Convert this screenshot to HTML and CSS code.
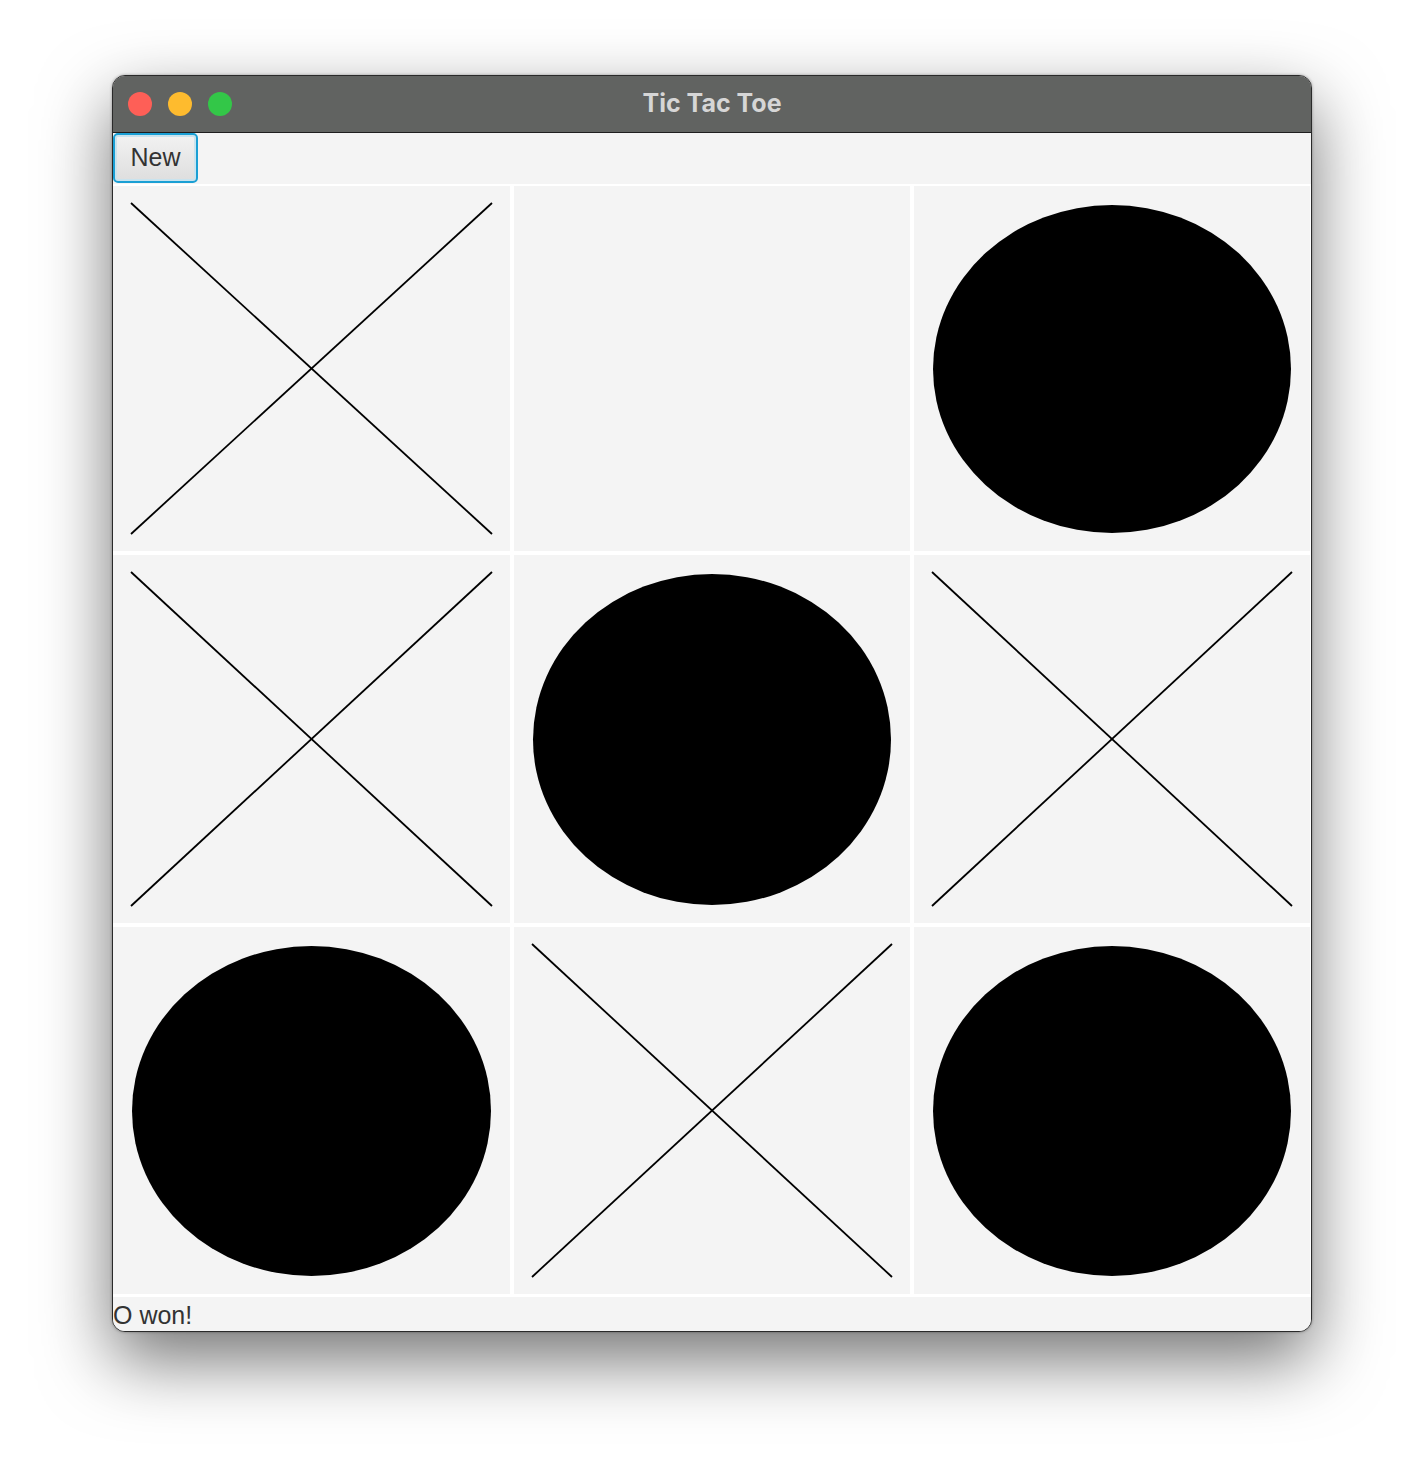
FILE: index.html
```html
<!DOCTYPE html>
<html>
<head>
<meta charset="utf-8">
<title>Tic Tac Toe</title>
<link rel="stylesheet" href="styles.css">
</head>
<body>
<div class="window">
  <div class="titlebar">
    <div class="lights">
      <span class="light red"></span>
      <span class="light yellow"></span>
      <span class="light green"></span>
    </div>
    <div class="title">Tic Tac Toe</div>
  </div>
  <div class="content">
    <div class="toolbar">
      <button class="btn">New</button>
    </div>
    <div class="board">
      <div class="cell"><svg class="x" viewBox="0 0 100 100" preserveAspectRatio="none"><line x1="0" y1="0" x2="100" y2="100"/><line x1="100" y1="0" x2="0" y2="100"/></svg></div>
      <div class="cell"></div>
      <div class="cell"><div class="o"></div></div>
      <div class="cell"><svg class="x" viewBox="0 0 100 100" preserveAspectRatio="none"><line x1="0" y1="0" x2="100" y2="100"/><line x1="100" y1="0" x2="0" y2="100"/></svg></div>
      <div class="cell"><div class="o"></div></div>
      <div class="cell"><svg class="x" viewBox="0 0 100 100" preserveAspectRatio="none"><line x1="0" y1="0" x2="100" y2="100"/><line x1="100" y1="0" x2="0" y2="100"/></svg></div>
      <div class="cell"><div class="o"></div></div>
      <div class="cell"><svg class="x" viewBox="0 0 100 100" preserveAspectRatio="none"><line x1="0" y1="0" x2="100" y2="100"/><line x1="100" y1="0" x2="0" y2="100"/></svg></div>
      <div class="cell"><div class="o"></div></div>
    </div>
    <div class="status">O won!</div>
  </div>
</div>
</body>
</html>
```
FILE: styles.css
```css
html, body {
  margin: 0;
  padding: 0;
  background: #ffffff;
}
body {
  padding: 75px 112px 148px 112px;
  font-family: "Liberation Sans", Arial, sans-serif;
}
.window {
  width: 1200px;
  height: 1257px;
  box-sizing: border-box;
  border: 1px solid #2a2a2a;
  border-radius: 13px;
  overflow: hidden;
  display: flex;
  flex-direction: column;
  background: #f4f4f4;
  box-shadow: 0 28px 70px rgba(0, 0, 0, 0.55), 0 0 3px rgba(0, 0, 0, 0.35);
}
.titlebar {
  height: 56px;
  flex: none;
  background: #616361;
  border-bottom: 1px solid #1e1e1e;
  display: flex;
  align-items: center;
  position: relative;
}
.lights {
  display: flex;
  gap: 16px;
  padding-left: 15px;
}
.light {
  width: 24px;
  height: 24px;
  border-radius: 50%;
  display: block;
}
.red { background: #fe5f57; }
.yellow { background: #febb2e; }
.green { background: #33c748; }
.title {
  position: absolute;
  left: 0;
  right: 0;
  top: 0;
  bottom: 0;
  display: flex;
  align-items: center;
  justify-content: center;
  font-family: Inter, "Liberation Sans", sans-serif;
  font-weight: 700;
  font-size: 25px;
  color: #d6d6d6;
  padding-bottom: 2px;
}
.content {
  flex: 1;
  display: flex;
  flex-direction: column;
  background: #f4f4f4;
}
.toolbar {
  height: 51px;
  display: flex;
  align-items: flex-start;
}
.btn {
  width: 85px;
  height: 50px;
  margin: 0;
  box-sizing: border-box;
  border: 2px solid #1a9fd4;
  border-radius: 5px;
  background: linear-gradient(#f2f2f2, #dedede);
  box-shadow: inset 0 0 0 2px #c9e3ee;
  font-family: "Liberation Sans", Arial, sans-serif;
  font-size: 25px;
  color: #333333;
  padding: 0 0 1px 0;
}
.board {
  background: #ffffff;
  display: grid;
  grid-template-columns: 397px 396px 396px;
  grid-template-rows: 365px 368px 367px;
  column-gap: 4px;
  row-gap: 4px;
  padding: 2px 1px 3px 0;
}
.cell {
  background: #f4f4f4;
  display: flex;
  padding: 17px 18px;
  box-sizing: border-box;
}
.x {
  flex: 1;
  width: 100%;
  height: 100%;
  overflow: visible;
}
.x line {
  stroke: #000;
  stroke-width: 1.8px;
  vector-effect: non-scaling-stroke;
}
.o {
  flex: 1;
  margin: 2px 1px 1px 1px;
  background: #000;
  border-radius: 50%;
}
.status {
  font-size: 25px;
  color: #333333;
  padding: 4px 0 0 0;
  line-height: 28px;
}
```
